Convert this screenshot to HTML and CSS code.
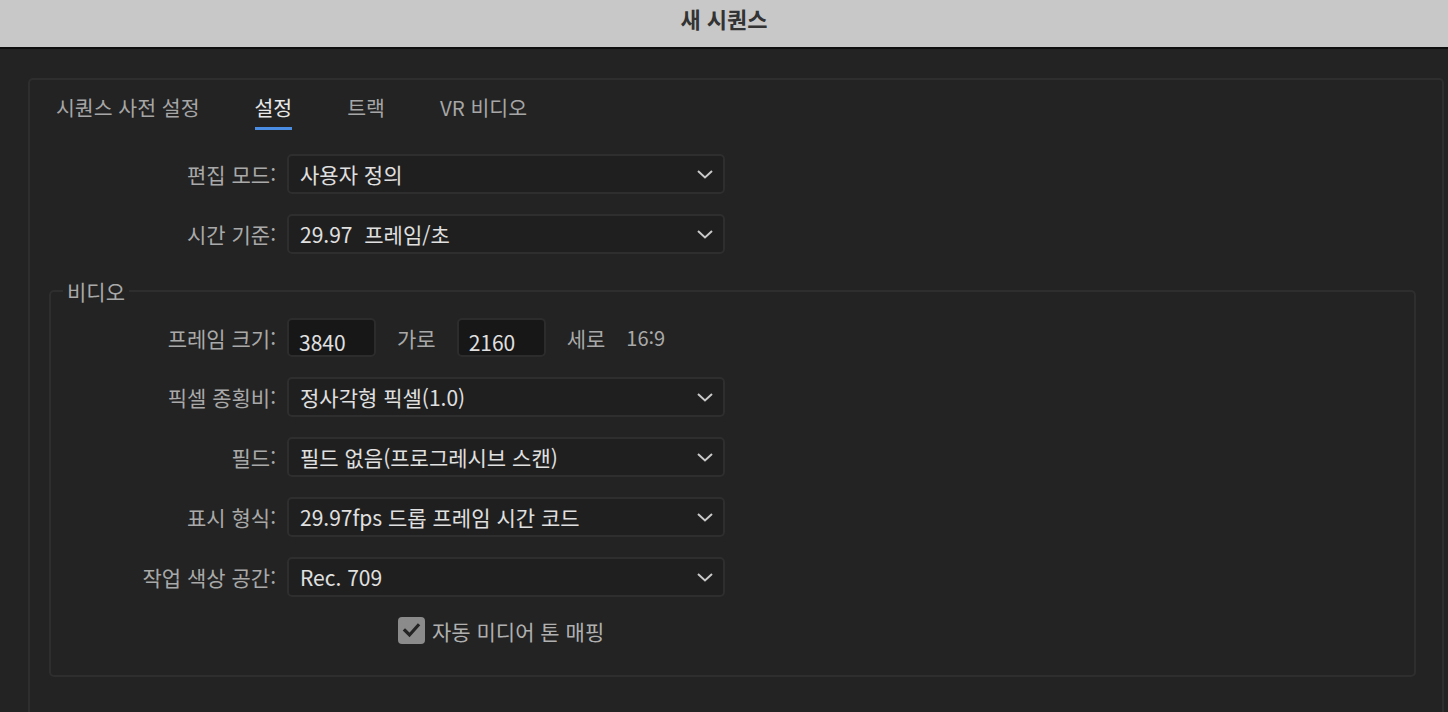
FILE: index.html
```html
<!DOCTYPE html>
<html lang="ko">
<head>
<meta charset="utf-8">
<title>새 시퀀스</title>
<link rel="stylesheet" href="styles.css">
</head>
<body>
<header class="titlebar">새 시퀀스</header>
<main class="body">
  <section class="panel">
    <nav class="tabs">
      <span class="tab">시퀀스 사전 설정</span>
      <span class="tab active">설정</span>
      <span class="tab">트랙</span>
      <span class="tab">VR 비디오</span>
    </nav>

    <div class="form form-top">
      <label class="lbl">편집 모드:</label>
      <div class="select"><span>사용자 정의</span><svg class="chev" viewBox="0 0 16 9"><path d="M1 1 L8 7.5 L15 1"/></svg></div>
      <label class="lbl">시간 기준:</label>
      <div class="select"><span>29.97&nbsp; 프레임/초</span><svg class="chev" viewBox="0 0 16 9"><path d="M1 1 L8 7.5 L15 1"/></svg></div>
    </div>

    <fieldset class="group">
      <legend>비디오</legend>
      <div class="form form-video">
        <label class="lbl">프레임 크기:</label>
        <div class="size-row">
          <div class="num">3840</div>
          <span class="unit">가로</span>
          <div class="num">2160</div>
          <span class="unit">세로</span>
          <span class="ratio">16:9</span>
        </div>
        <label class="lbl">픽셀 종횡비:</label>
        <div class="select"><span>정사각형 픽셀(1.0)</span><svg class="chev" viewBox="0 0 16 9"><path d="M1 1 L8 7.5 L15 1"/></svg></div>
        <label class="lbl">필드:</label>
        <div class="select"><span>필드 없음(프로그레시브 스캔)</span><svg class="chev" viewBox="0 0 16 9"><path d="M1 1 L8 7.5 L15 1"/></svg></div>
        <label class="lbl">표시 형식:</label>
        <div class="select"><span>29.97fps 드롭 프레임 시간 코드</span><svg class="chev" viewBox="0 0 16 9"><path d="M1 1 L8 7.5 L15 1"/></svg></div>
        <label class="lbl">작업 색상 공간:</label>
        <div class="select"><span>Rec. 709</span><svg class="chev" viewBox="0 0 16 9"><path d="M1 1 L8 7.5 L15 1"/></svg></div>
        <span></span>
        <div class="check-row">
          <span class="checkbox"><svg viewBox="0 0 27 27"><path d="M7 13.5 L11.5 18 L20 8.5"/></svg></span>
          <span class="check-label">자동 미디어 톤 매핑</span>
        </div>
      </div>
    </fieldset>
  </section>
</main>
</body>
</html>
```

FILE: styles.css
```css
* { box-sizing: border-box; }

html, body {
  margin: 0;
  padding: 0;
  height: 100%;
  overflow: hidden;
}

body {
  background: #232323;
  font-family: "Noto Sans CJK KR", "Noto Sans", sans-serif;
  color: #a9a9a9;
}

.titlebar {
  height: 49px;
  background: #c8c8c8;
  border-bottom: 2px solid #0f0f0f;
  color: #333333;
  font-weight: 700;
  font-size: 22px;
  line-height: 36px;
  text-align: center;
}

.body {
  padding: 29px 4px 0 28px;
}

.panel {
  border: 2px solid #2e2e2e;
  border-bottom: none;
  border-radius: 5px 5px 0 0;
  height: 634px;
}

.tabs {
  display: flex;
  gap: 55px;
  padding-left: 26px;
  padding-top: 12px;
}

.tab {
  font-size: 20.5px;
  line-height: 30px;
  padding-bottom: 5px;
  border-bottom: 3px solid transparent;
  color: #a6a6a6;
}

.tab.active {
  color: #e8e8e8;
  border-bottom-color: #4a8de4;
}

.form {
  display: grid;
  column-gap: 11px;
  row-gap: 20px;
  align-items: center;
}

.form-top {
  grid-template-columns: 246px 438px;
  margin-top: 24px;
}

.form-video {
  grid-template-columns: 225px 438px;
}

.lbl {
  text-align: right;
  font-size: 21px;
  line-height: 30px;
  color: #a9a9a9;
}

.select {
  height: 40px;
  display: flex;
  align-items: center;
  justify-content: space-between;
  padding: 0 10px 0 11px;
  background: #1f1f1f;
  border: 2px solid #2e2e2e;
  border-radius: 5px;
  color: #e0e0e0;
  font-size: 21px;
  white-space: nowrap;
}

.chev {
  width: 16px;
  height: 9px;
  fill: none;
  stroke: #c9c9c9;
  stroke-width: 2;
}

.group {
  margin: 22px 26px 0 19px;
  padding: 12px 0 31px 0;
  border: 2px solid #2e2e2e;
  border-radius: 5px;
  min-width: 0;
}

.group legend {
  margin-left: 12px;
  padding: 0 4px;
  font-size: 21px;
  line-height: 30px;
  color: #a9a9a9;
}

.size-row {
  display: flex;
  align-items: center;
  height: 39px;
  font-size: 21px;
}

.num {
  width: 89px;
  height: 39px;
  background: #171717;
  border: 2px solid #2c2c2c;
  border-radius: 5px;
  color: #e0e0e0;
  padding: 7px 0 0 10px;
  line-height: 30px;
}

.unit {
  margin: 0 21px;
  color: #a9a9a9;
}

.ratio {
  color: #a9a9a9;
  font-size: 20px;
}

.check-row {
  display: flex;
  align-items: center;
  gap: 7px;
  padding-left: 111px;
  height: 27px;
}

.checkbox {
  width: 27px;
  height: 27px;
  border-radius: 4px;
  background: #8b8b8b;
  display: flex;
}

.checkbox svg {
  width: 27px;
  height: 27px;
  fill: none;
  stroke: #242424;
  stroke-width: 3.2;
  stroke-linecap: square;
}

.check-label {
  font-size: 21px;
  color: #b0b0b0;
}
```
